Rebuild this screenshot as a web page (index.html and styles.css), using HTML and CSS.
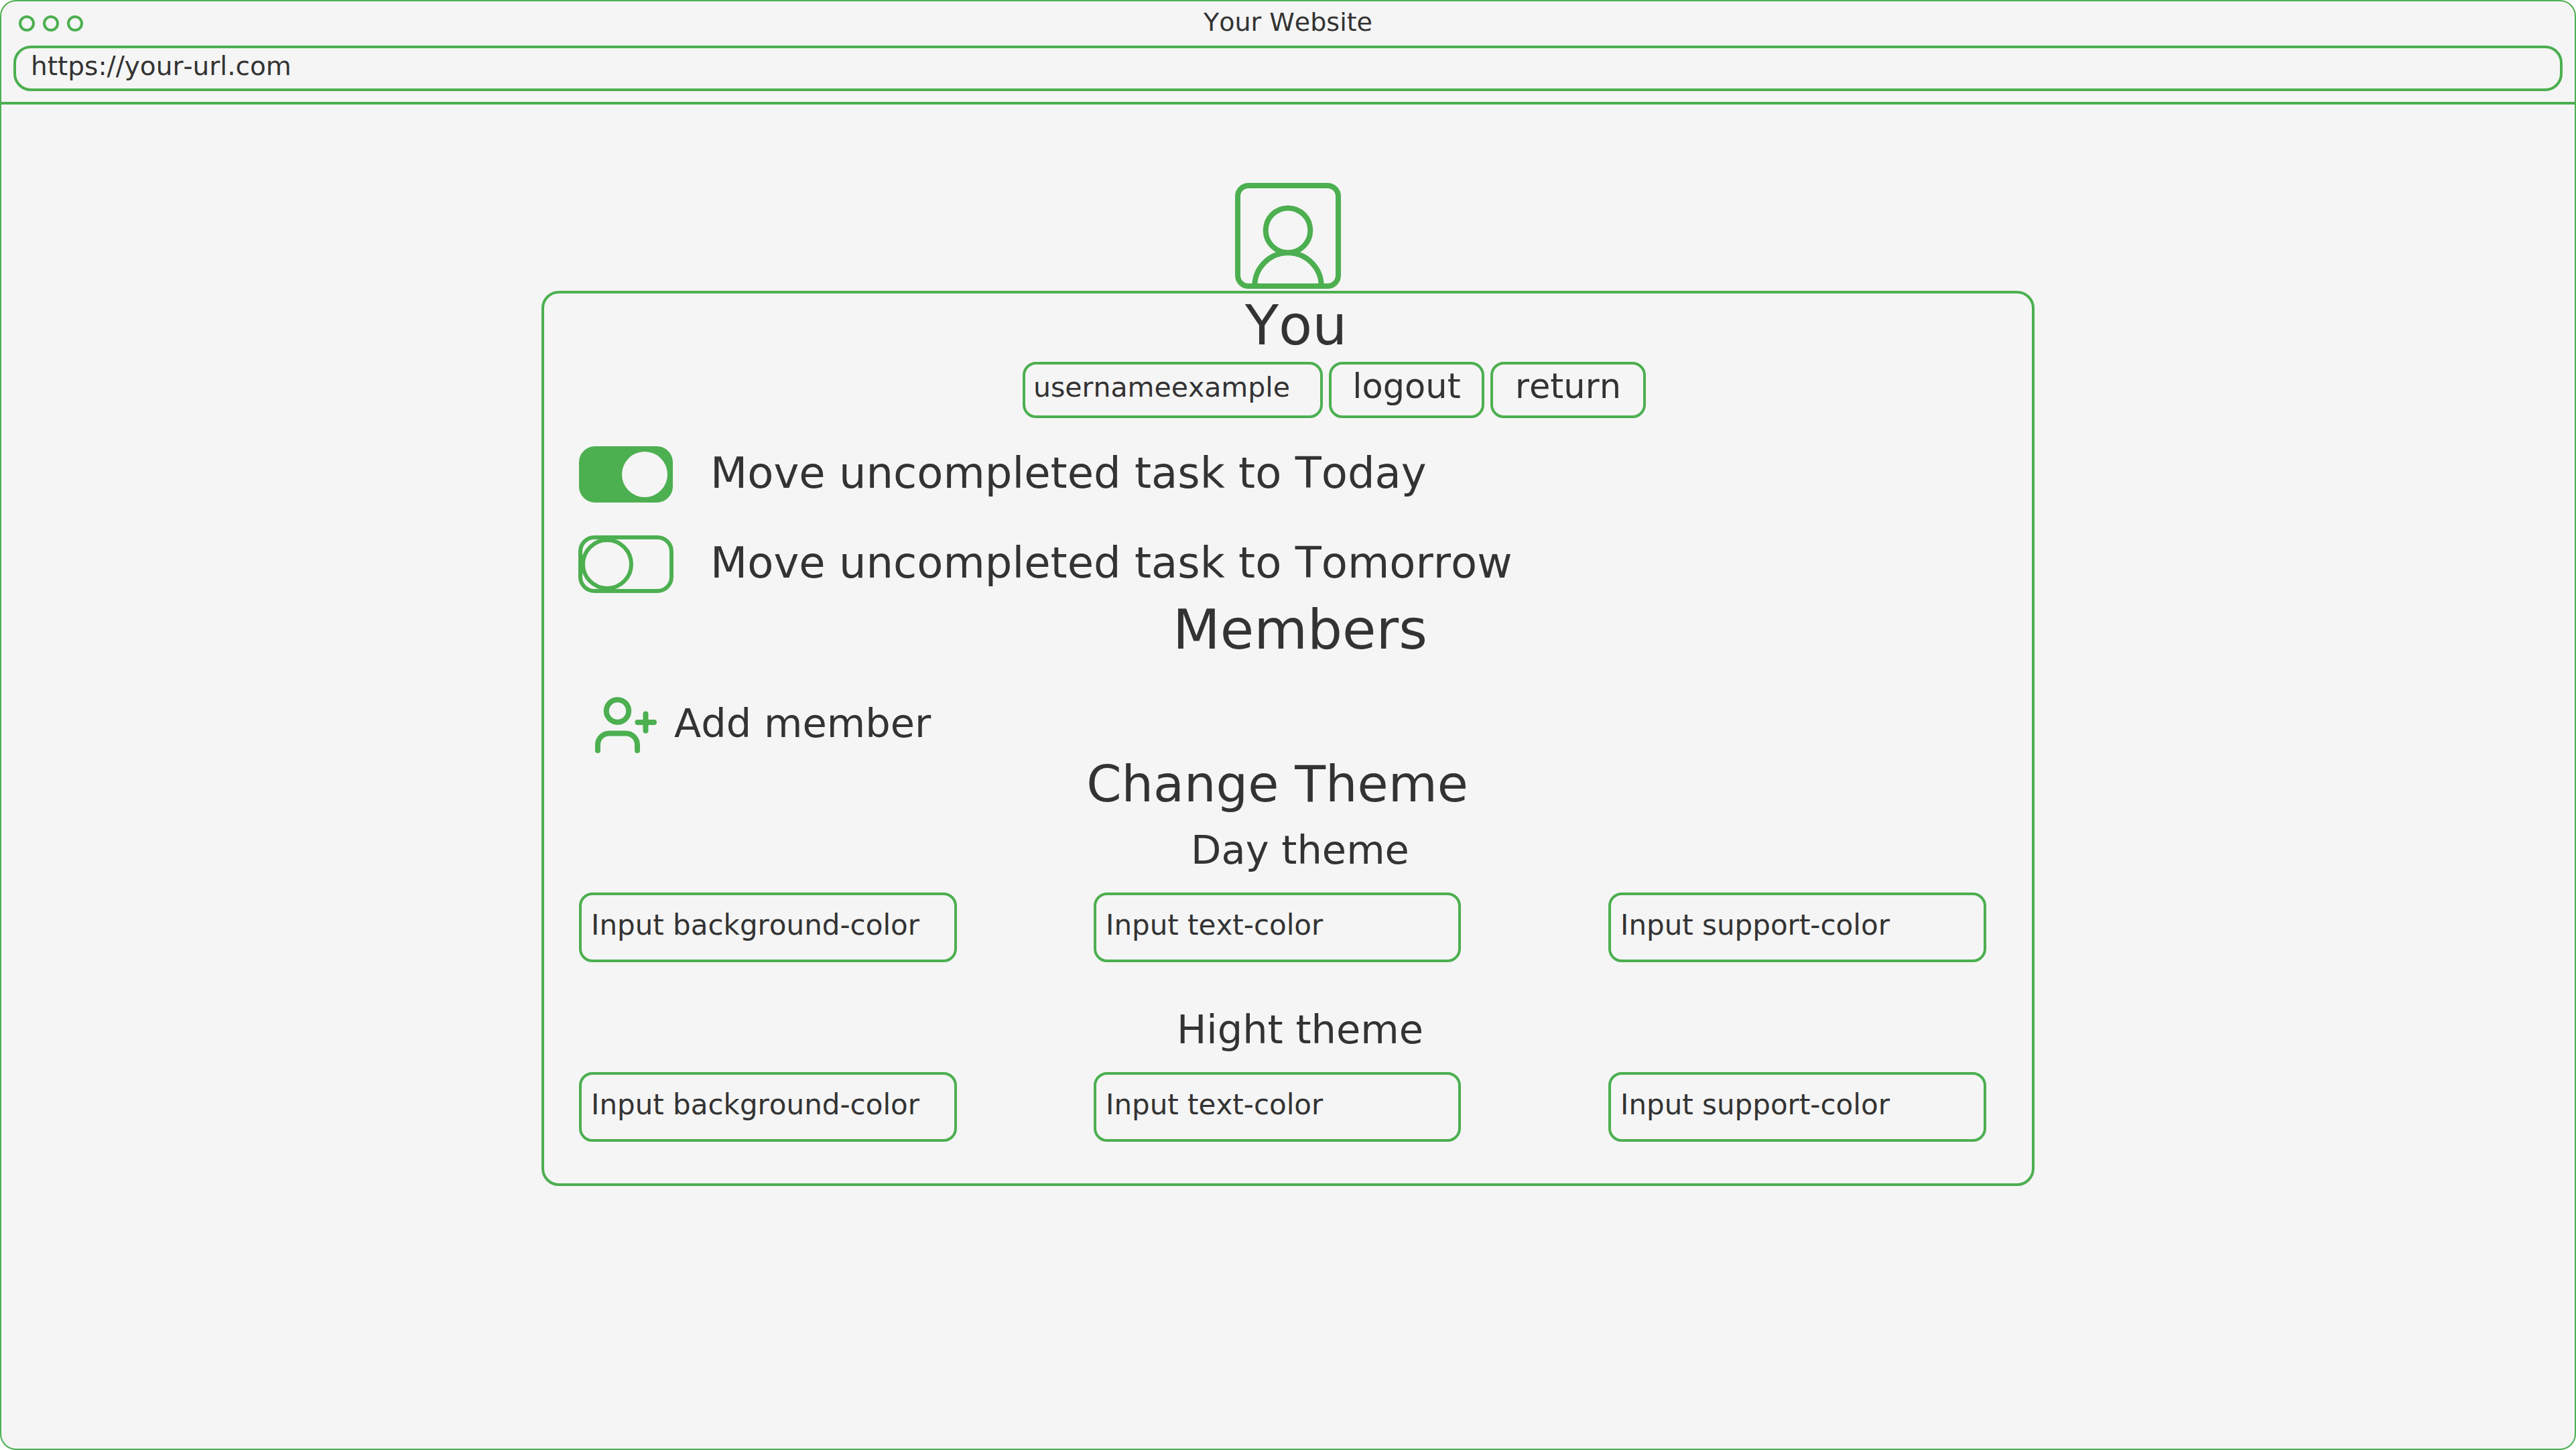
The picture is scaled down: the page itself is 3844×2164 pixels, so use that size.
FILE: index.html
```html
<!DOCTYPE html>
<html lang="en">
<head>
<meta charset="utf-8">
<meta name="viewport" content="width=device-width, initial-scale=1">
<title>Your Website</title>
<link rel="stylesheet" href="styles.css">
</head>
<body>
<div class="browser">
  <header class="chrome">
    <div class="titlebar">
      <div class="dots"><span class="dot"></span><span class="dot"></span><span class="dot"></span></div>
      <div class="site-title">Your Website</div>
    </div>
    <input class="field url" type="text" aria-label="Address" value="https://your-url.com">
  </header>
  <main class="page">
    <svg class="avatar" viewBox="0 0 158 158" role="img" aria-label="Profile picture">
      <rect x="4" y="4" width="150" height="150" rx="16"/>
      <circle cx="79" cy="70.7" r="33.3"/>
      <path d="M29.3 154A49.7 49.7 0 0 1 128.7 154"/>
    </svg>
    <section class="panel">
      <h1 class="heading heading-you">You</h1>
      <div class="account">
        <input class="field username" type="text" aria-label="Username" value="usernameexample">
        <button class="button" type="button">logout</button>
        <button class="button" type="button">return</button>
      </div>
      <div class="options">
        <div class="option">
          <input class="toggle" type="checkbox" id="move-today" checked>
          <label class="option-label" for="move-today">Move uncompleted task to Today</label>
        </div>
        <div class="option">
          <input class="toggle" type="checkbox" id="move-tomorrow">
          <label class="option-label" for="move-tomorrow">Move uncompleted task to Tomorrow</label>
        </div>
      </div>
      <h2 class="heading heading-members">Members</h2>
      <button class="add-member" type="button">
        <svg class="add-icon" viewBox="0 0 92 84" aria-hidden="true">
          <circle cx="33.5" cy="21" r="16.7"/>
          <path d="M4 80V71.500A17 17 0 0 1 21 54.500H46A17 17 0 0 1 63 71.500V80M63.500 38H88M75.500 25.500V50.500"/>
        </svg>
        <span>Add member</span>
      </button>
      <h2 class="heading heading-theme">Change Theme</h2>
      <div class="theme">
        <h3 class="subheading">Day theme</h3>
        <div class="colors">
          <input class="field color" type="text" aria-label="Day background color" placeholder="Input background-color">
          <input class="field color color-text" type="text" aria-label="Day text color" placeholder="Input text-color">
          <input class="field color" type="text" aria-label="Day support color" placeholder="Input support-color">
        </div>
      </div>
      <div class="theme">
        <h3 class="subheading">Hight theme</h3>
        <div class="colors">
          <input class="field color" type="text" aria-label="Hight background color" placeholder="Input background-color">
          <input class="field color color-text" type="text" aria-label="Hight text color" placeholder="Input text-color">
          <input class="field color" type="text" aria-label="Hight support color" placeholder="Input support-color">
        </div>
      </div>
    </section>
  </main>
</div>
</body>
</html>
```
FILE: styles.css
```css
:root {
  --green: #4caf50;
  --ink: #333333;
  --paper: #f5f5f5;
}

*,
*::before {
  box-sizing: border-box;
}

body {
  margin: 0;
  background: #ffffff;
  color: var(--ink);
  font-family: "DejaVu Sans", sans-serif;
  font-kerning: none;
}

.browser {
  min-height: 100vh;
  border: 2px solid var(--green);
  border-radius: 24px;
  background: var(--paper);
}

.chrome {
  padding: 0 18px 16px;
  border-bottom: 4px solid var(--green);
}

.titlebar {
  display: grid;
  grid-template-columns: 1fr auto 1fr;
  align-items: center;
  height: 66px;
  padding: 0 8px;
}

.dots {
  display: flex;
  gap: 12px;
}

.dot {
  width: 24px;
  height: 24px;
  border: 4px solid var(--green);
  border-radius: 50%;
}

.site-title {
  padding-bottom: 4px;
  font-size: 38px;
  line-height: 48px;
}

.field {
  display: block;
  width: 100%;
  min-width: 0;
  margin: 0;
  padding: 0 12px 8px;
  border: 4px solid var(--green);
  border-radius: 20px;
  outline: none;
  background: transparent;
  color: var(--ink);
  font: inherit;
  font-kerning: none;
}

.field::placeholder {
  color: var(--ink);
  opacity: 1;
}

.url {
  height: 68px;
  padding: 0 22px 8px;
  border-radius: 26px;
  font-size: 39px;
}

.page {
  display: flex;
  flex-direction: column;
  align-items: center;
  gap: 3px;
  padding: 117px 0 48px;
}

.avatar,
.add-icon {
  fill: none;
  stroke: var(--green);
  stroke-width: 8px;
}

.avatar {
  width: 158px;
  height: 158px;
}

.panel {
  width: 90%;
  max-width: 2228px;
  padding: 0 68px 62px 52px;
  border: 4px solid var(--green);
  border-radius: 26px;
}

.heading,
.subheading {
  margin: 0;
  font-weight: 400;
  text-align: center;
}

.heading {
  font-size: 82px;
  line-height: 96px;
}

.heading-you {
  padding-left: 40px;
}

.heading-members {
  margin-top: 8px;
  padding-left: 52px;
}

.heading-theme {
  padding-right: 16px;
  font-size: 75px;
  line-height: 92px;
}

.account {
  display: flex;
  justify-content: center;
  gap: 9px;
  margin-top: 6px;
  padding-left: 154px;
}

.username {
  width: 448px;
  height: 84px;
  font-size: 41px;
}

.button {
  width: 232px;
  height: 84px;
  padding: 0 0 12px;
  border: 4px solid var(--green);
  border-radius: 20px;
  background: transparent;
  color: var(--ink);
  font: inherit;
  font-size: 51px;
}

.options {
  display: grid;
  gap: 50px;
  margin-top: 42px;
}

.option {
  display: flex;
  align-items: center;
  gap: 56px;
  height: 84px;
}

.toggle {
  position: relative;
  flex: none;
  width: 142px;
  height: 86px;
  margin: 0 -1px;
  border: 6px solid var(--green);
  border-radius: 24px;
  appearance: none;
}

.toggle::before {
  content: "";
  position: absolute;
  top: -2px;
  left: -2px;
  width: 78px;
  height: 78px;
  border: 6px solid var(--green);
  border-radius: 50%;
  background: var(--paper);
}

.toggle:checked {
  width: 140px;
  height: 84px;
  margin: 0;
  background: var(--green);
}

.toggle:checked::before {
  top: 2px;
  right: 2px;
  left: auto;
  width: 68px;
  height: 68px;
  border: 0;
}

.option-label {
  padding-bottom: 4px;
  font-size: 64px;
  line-height: 76px;
}

.add-member {
  display: flex;
  align-items: center;
  gap: 26px;
  height: 84px;
  margin: 52px 0 0 24px;
  padding: 0;
  border: 0;
  background: transparent;
  color: var(--ink);
  font: inherit;
  font-size: 59px;
  line-height: 72px;
}

.add-member span {
  padding-bottom: 4px;
}

.add-icon {
  width: 92px;
  height: 84px;
  stroke-linecap: round;
}

.theme {
  padding-top: 17px;
}

.theme + .theme {
  padding-top: 65px;
}

.subheading {
  padding-left: 52px;
  font-size: 59px;
  line-height: 72px;
}

.colors {
  display: grid;
  grid-template-columns: repeat(3, 1fr);
  gap: 204px;
  margin-top: 27px;
}

.color {
  height: 104px;
  padding: 0 14px 8px;
  font-size: 42px;
}

.color-text {
  width: calc(100% - 16px);
}
```
